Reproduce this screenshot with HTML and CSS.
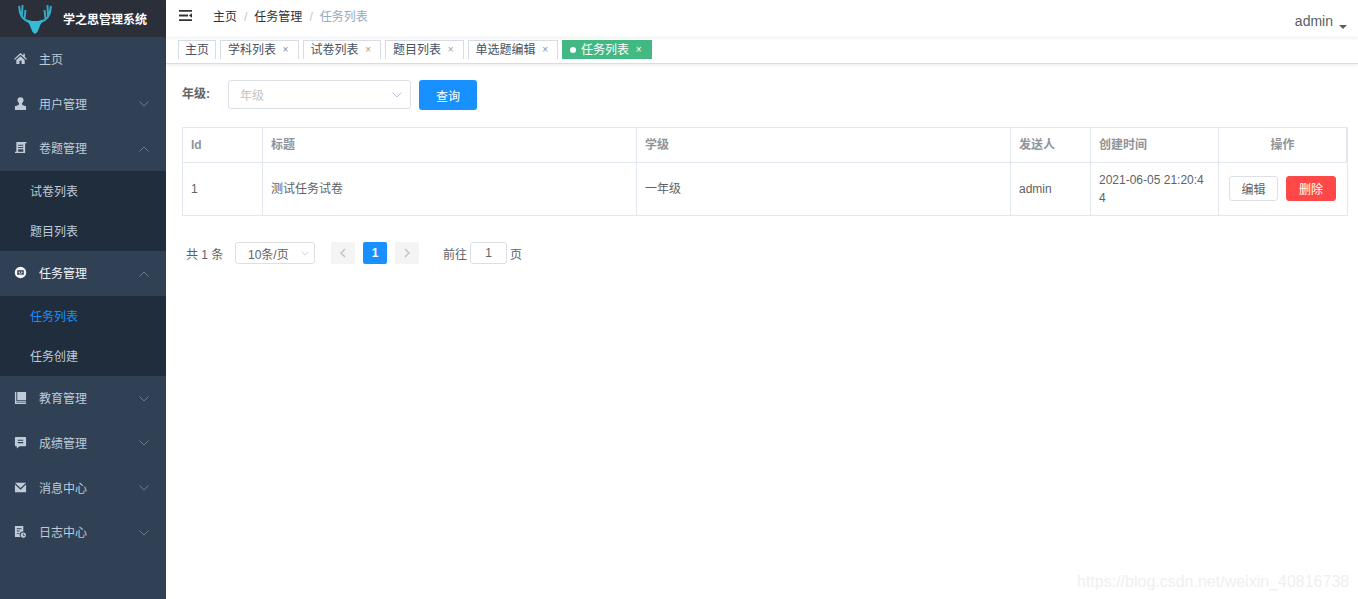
FILE: index.html
```html
<!DOCTYPE html>
<html lang="zh-CN">
<head>
<meta charset="utf-8">
<title>学之思管理系统</title>
<link rel="stylesheet" href="styles.css">
</head>
<body>
<div class="app">
  <aside class="sidebar">
    <div class="brand">
      <svg class="deer" viewBox="0 0 36 30" width="36" height="30">
        <path class="deer-antler" d="M12 18C7 16 3 12 2.500 6M3.500 10L2 2M5 12.500L5.500 1M7.500 15L8.500 6M24 18c5-2 9-6 9.500-12M32.500 10L34 2M31 12.500L30.500 1M28.500 15L27.500 6"/>
        <path class="deer-head" d="M9.500 15.500l5.500 1.500h6l5.500-1.500-3 5-3 7.500-2.500 2-2.500-2-3-7.500z"/>
      </svg>
      <span class="brand-name">学之思管理系统</span>
    </div>
    <nav class="menu">
      <div class="item">
        <svg class="ico" viewBox="0 0 14 14"><path d="M7 1L0 7.500l1 .8L7 3l6 5.300 1-.8-2.300-2V2h-1.700v1.800zM2.500 8.500V13h3.300V9.500h2.400V13h3.300V8.500L7 4.500z"/></svg>
        <span class="label">主页</span>
      </div>
      <div class="item">
        <svg class="ico" viewBox="0 0 14 14"><circle cx="7" cy="3.500" r="3.200"/><path d="M5.500 6h3L9 8.500l4 1.500v4H1v-4l4-1.500z"/></svg>
        <span class="label">用户管理</span>
        <svg class="arrow" viewBox="0 0 10 6"><path d="M.5.500L5 5 9.500.500"/></svg>
      </div>
      <div class="item">
        <svg class="ico" viewBox="0 0 14 14"><path fill-rule="evenodd" d="M2.500 1H13.500v1.500h-1.500v10.500H1v-1.500h1.500zM4.500 4v1h5.500V4zM4.500 6.500v1h5.500v-1zM4.500 9v2.500h5.500V9z"/></svg>
        <span class="label">卷题管理</span>
        <svg class="arrow" viewBox="0 0 10 6"><path d="M.5 5.500L5 1l4.500 4.500"/></svg>
      </div>
      <div class="sub">
        <div class="sub-item">试卷列表</div>
        <div class="sub-item">题目列表</div>
      </div>
      <div class="item item-open">
        <svg class="ico" viewBox="0 0 14 14"><path fill-rule="evenodd" d="M7 .8a6.200 6.200 0 1 0 0 12.400A6.200 6.200 0 0 0 7 .8zM3.500 4.500h7v5h-7zM5 6v1.500h1.300V6zM7.700 6v1.500H9V6zM5.800 8.200v.6h2.400v-.6z"/></svg>
        <span class="label">任务管理</span>
        <svg class="arrow" viewBox="0 0 10 6"><path d="M.5 5.500L5 1l4.500 4.500"/></svg>
      </div>
      <div class="sub">
        <div class="sub-item sub-active">任务列表</div>
        <div class="sub-item">任务创建</div>
      </div>
      <div class="item">
        <svg class="ico" viewBox="0 0 14 14"><path d="M1 1h1.500v10H13v1.500H2.500v.4H13V14H1zM3.500 1h9.500v9H3.500z"/></svg>
        <span class="label">教育管理</span>
        <svg class="arrow" viewBox="0 0 10 6"><path d="M.5.500L5 5 9.500.500"/></svg>
      </div>
      <div class="item">
        <svg class="ico" viewBox="0 0 14 14"><path fill-rule="evenodd" d="M2 1h10a1 1 0 0 1 1 1v8a1 1 0 0 1-1 1H6l-3 2.500V11H2a1 1 0 0 1-1-1V2a1 1 0 0 1 1-1zM4 4v1.200h6V4zM4 6.500v1.200h6V6.500z"/></svg>
        <span class="label">成绩管理</span>
        <svg class="arrow" viewBox="0 0 10 6"><path d="M.5.500L5 5 9.500.500"/></svg>
      </div>
      <div class="item">
        <svg class="ico" viewBox="0 0 14 14"><path d="M1 2h12L7 7.500zM1 3.800l6 5.500 6-5.500V12H1z"/></svg>
        <span class="label">消息中心</span>
        <svg class="arrow" viewBox="0 0 10 6"><path d="M.5.500L5 5 9.500.500"/></svg>
      </div>
      <div class="item">
        <svg class="ico" viewBox="0 0 14 14"><path fill-rule="evenodd" d="M1 1h9v6a3.500 3.500 0 0 0-3 6H1zM3 3.500v1h5v-1zM3 6v1h3V6zM3 8.500v1h2.500v-1z"/><path fill-rule="evenodd" d="M10 8a2.800 2.800 0 1 0 0 5.600A2.800 2.800 0 0 0 10 8zm-.4 1.200h.8v1.500h1.200v.8h-2z"/></svg>
        <span class="label">日志中心</span>
        <svg class="arrow" viewBox="0 0 10 6"><path d="M.5.500L5 5 9.500.500"/></svg>
      </div>
    </nav>
  </aside>
  <main class="main">
    <header class="navbar">
      <svg class="hamburger" viewBox="0 0 13 11" width="13" height="11"><path d="M0 0h13v1.800H0zM0 4.600h9v1.800H0zM0 9.200h13V11H0zM13 3.200v4.600L9.800 5.500z"/></svg>
      <div class="crumbs">
        <span class="crumb">主页</span><span class="sep">/</span><span class="crumb">任务管理</span><span class="sep">/</span><span class="crumb crumb-last">任务列表</span>
      </div>
      <div class="user"><span class="user-name">admin</span><span class="caret"></span></div>
    </header>
    <div class="tags">
      <span class="tag tag-home">主页</span>
      <span class="tag">学科列表<i class="x">×</i></span>
      <span class="tag">试卷列表<i class="x x-warm">×</i></span>
      <span class="tag">题目列表<i class="x x-warm">×</i></span>
      <span class="tag">单选题编辑<i class="x">×</i></span>
      <span class="tag tag-active"><b class="dot"></b>任务列表<i class="x">×</i></span>
    </div>
    <section class="content">
      <div class="filter">
        <span class="filter-label">年级:</span>
        <div class="select select-grade"><span class="placeholder">年级</span>
          <svg class="chev" viewBox="0 0 10 6"><path d="M.5.500L5 5 9.500.500"/></svg></div>
        <button class="btn-primary">查询</button>
      </div>
      <table class="grid">
        <colgroup>
          <col class="c1"><col class="c2"><col class="c3"><col class="c4"><col class="c5"><col class="c6">
        </colgroup>
        <thead>
          <tr><th>Id</th><th>标题</th><th>学级</th><th>发送人</th><th>创建时间</th><th class="center">操作</th></tr>
        </thead>
        <tbody>
          <tr>
            <td>1</td><td>测试任务试卷</td><td>一年级</td><td>admin</td><td class="time">2021-06-05 21:20:44</td>
            <td class="ops"><button class="btn-edit">编辑</button><button class="btn-del">删除</button></td>
          </tr>
        </tbody>
      </table>
      <div class="pager">
        <span class="total">共 1 条</span>
        <div class="select select-size"><span>10条/页</span>
          <svg class="chev chev-sm" viewBox="0 0 10 6"><path d="M.5.500L5 5 9.500.500"/></svg></div>
        <span class="page-btn page-prev"><svg viewBox="0 0 6 10" width="6" height="10"><path d="M5 1L1 5l4 4"/></svg></span>
        <span class="page-btn page-on">1</span>
        <span class="page-btn"><svg viewBox="0 0 6 10" width="6" height="10"><path d="M1 1l4 4-4 4"/></svg></span>
        <span class="goto">前往</span>
        <span class="page-input">1</span>
        <span class="goto-end">页</span>
      </div>
    </section>
  </main>
</div>
<div class="watermark">https://blog.csdn.net/weixin_40816738</div>
</body>
</html>
```
FILE: styles.css
```css
* { box-sizing: border-box; }
html, body { margin: 0; height: 100%; overflow: hidden; }
body {
  font-family: "Liberation Sans", "Noto Sans CJK SC", sans-serif;
  font-size: 12px;
  color: #606266;
  background: #fff;
}
.app { display: flex; height: 599px; }

.sidebar { width: 166px; flex: none; background: #304156; }
.brand {
  height: 37px;
  background: #2b2f3a;
  display: flex;
  align-items: center;
  padding-left: 17px;
  color: #fff;
  font-weight: 700;
}
.deer { flex: none; }
.deer-antler { fill: none; stroke: #33a9c4; stroke-width: 2; }
.deer-head { fill: #36bad8; }
.brand-name { margin-left: 10px; }

.item {
  height: 44.8px;
  display: flex;
  align-items: center;
  padding: 0 0 2px 14px;
  color: #bfcbd9;
}
.item-open { color: #f4f4f5; }
.ico { width: 13px; height: 13px; flex: none; fill: currentColor; }
.label { margin-left: 12px; flex: 1; }
.arrow {
  width: 10px;
  height: 6px;
  margin: 2px 17px 0 0;
  fill: none;
  stroke: #6e7c8d;
  stroke-width: 1;
}
.sub { background: #1f2d3d; }
.sub-item {
  height: 40px;
  padding: 2px 0 0 30px;
  line-height: 38px;
  color: #bfcbd9;
}
.sub-active { color: #1890ff; }

.main { flex: 1; min-width: 0; }
.navbar {
  height: 37px;
  display: flex;
  align-items: flex-start;
  padding-left: 13px;
  box-shadow: 0 1px 3px rgba(0, 21, 41, .08);
  position: relative;
}
.hamburger { margin-top: 10px; flex: none; fill: #333; }
.crumbs { display: flex; margin-left: 21px; margin-top: 8px; line-height: 18px; color: #303133; flex: 1; }
.sep { margin: 0 7px; color: #c0c4cc; }
.crumb-last { color: #97a8be; }
.user { display: flex; margin-top: 12px; margin-right: 11px; }
.user-name { font-size: 14px; line-height: 18px; color: #5a5e66; }
.caret {
  width: 0;
  height: 0;
  margin: 13px 0 0 6px;
  border: 4px solid transparent;
  border-top-color: #5a5e66;
  border-bottom: 0;
}

.tags {
  height: 27px;
  padding: 3px 0 0 12px;
  display: flex;
  align-items: flex-start;
  gap: 4px;
  border-bottom: 1px solid #d8dce5;
  box-shadow: 0 1px 3px rgba(0, 0, 0, .08);
}
.tag {
  height: 19px;
  line-height: 20px;
  padding: 0 6px 0 7px;
  border: 1px solid #d8dce5;
  border-bottom: 0;
  color: #495060;
  white-space: nowrap;
  display: flex;
  align-items: center;
}
.tag-home { padding: 0 6px; }
.x { font-style: normal; font-size: 10px; color: #8a8f99; margin-left: 3.500px; width: 12px; text-align: center; }
.x-warm { color: #b89a80; }
.tag-active { background: #42b983; border-color: #42b983; color: #fff; }
.tag-active .x { color: #fff; }
.dot { width: 6px; height: 6px; border-radius: 50%; background: #fff; margin-right: 5px; }

.content { padding: 16px 11px 0 16px; }
.filter { display: flex; align-items: flex-start; height: 30px; }
.filter-label { font-weight: 700; line-height: 28px; width: 46px; color: #606266; }
.select {
  border: 1px solid #dcdfe6;
  border-radius: 3px;
  display: flex;
  align-items: center;
  justify-content: space-between;
}
.select-grade { width: 183px; height: 29px; padding: 0 8px 0 11px; }
.placeholder { color: #c0c4cc; }
.chev { width: 10px; height: 6px; fill: none; stroke: #c0c4cc; stroke-width: 1; flex: none; }
.btn-primary {
  width: 58px;
  height: 30px;
  margin-left: 8px;
  border: 0;
  border-radius: 3px;
  background: #1890ff;
  color: #fff;
  font: inherit;
  padding: 0;
}

.grid {
  margin-top: 17px;
  width: 1165px;
  table-layout: fixed;
  border-collapse: separate;
  border-spacing: 0;
  border-top: 1px solid #e3e7ef;
  border-left: 1px solid #e3e7ef;
}
.c1 { width: 80px; }
.c2, .c3 { width: 374px; }
.c4 { width: 80px; }
.c5 { width: 128px; }
.c6 { width: 129px; }
.grid th, .grid td {
  padding: 0 8px;
  text-align: left;
  border-right: 1px solid #e3e7ef;
  border-bottom: 1px solid #e3e7ef;
  line-height: 18px;
  font-weight: 400;
}
.grid th { height: 35px; font-weight: 700; color: #909399; }
.grid td { height: 53px; word-break: break-all; }
.grid th:last-child { border-right-width: 2px; }
.grid .center { text-align: center; }
.grid .ops { padding: 0 10px; white-space: nowrap; font-size: 0; }
.btn-edit, .btn-del {
  width: 50px;
  height: 25px;
  padding: 0;
  border-radius: 3px;
  font: 12px "Liberation Sans", "Noto Sans CJK SC", sans-serif;
}
.btn-edit { width: 49px; background: #fff; border: 1px solid #dcdfe6; color: #606266; }
.btn-del { margin-left: 8px; background: #ff4949; border: 1px solid #ff4949; color: #fff; }

.pager { margin-top: 26px; display: flex; align-items: center; height: 22px; padding-left: 4px; color: #606266; }
.total { width: 49px; }
.select-size { width: 80px; height: 22px; padding: 0 5px 0 12px; }
.chev-sm { width: 8px; height: 5px; }
.page-btn {
  width: 24px;
  height: 22px;
  margin-left: 8px;
  background: #f4f4f5;
  border-radius: 2px;
  display: flex;
  align-items: center;
  justify-content: center;
  font-weight: 700;
}
.page-btn svg { fill: none; stroke: #c0c4cc; stroke-width: 1.500; }
.page-prev { margin-left: 16px; }
.page-on { background: #1890ff; color: #fff; }
.goto { margin-left: 24px; }
.page-input {
  width: 37px;
  height: 22px;
  margin-left: 3px;
  border: 1px solid #dcdfe6;
  border-radius: 3px;
  text-align: center;
  line-height: 20px;
}
.goto-end { margin-left: 3px; }

.watermark {
  position: absolute;
  left: 1077px;
  top: 572px;
  font-size: 16px;
  line-height: 20px;
  color: #efefef;
  white-space: nowrap;
}
```
